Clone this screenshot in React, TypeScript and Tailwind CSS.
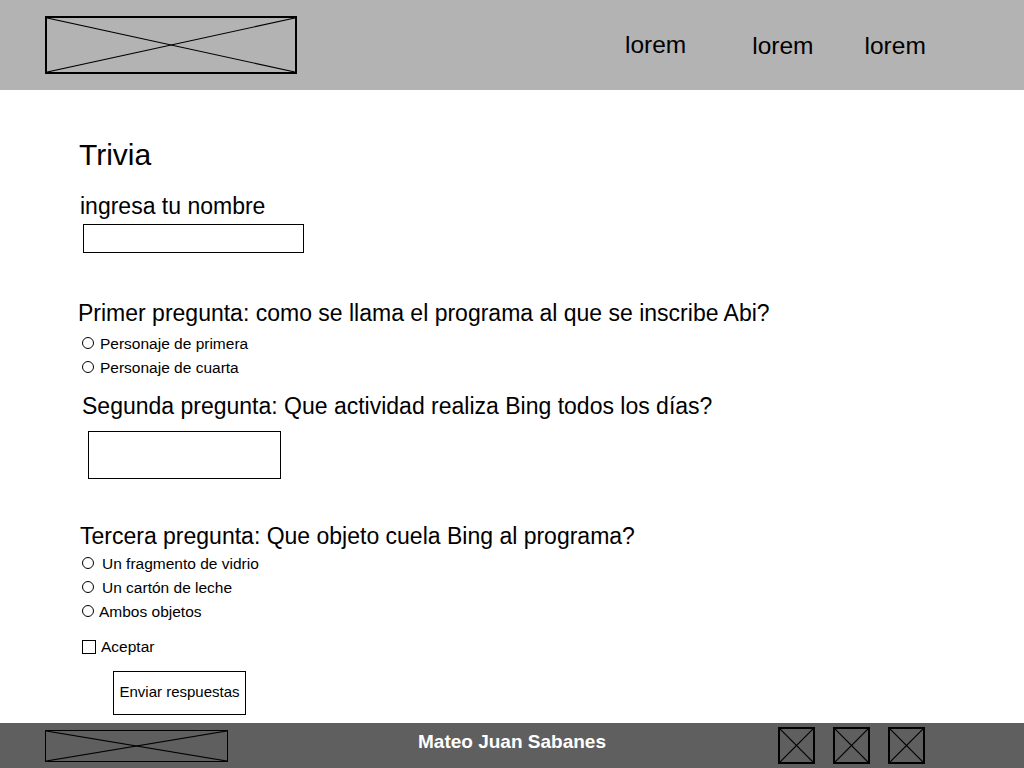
const navItems = [
  { label: 'lorem', offset: 'ml-[328px]' },
  { label: 'lorem', offset: 'ml-[66px] mt-[2px]' },
  { label: 'lorem', offset: 'ml-[51px] mt-[2px]' },
]

const firstOptions = ['Personaje de primera', 'Personaje de cuarta']

const thirdOptions = [
  { label: 'Un fragmento de vidrio', gap: 'gap-[8px]' },
  { label: 'Un cartón de leche', gap: 'gap-[8px]' },
  { label: 'Ambos objetos', gap: 'gap-[5px]' },
]

export default function App() {
  return (
    <div className="h-screen w-full flex flex-col bg-white text-black font-['Liberation_Sans',Arial,sans-serif]">
      <Header />
      <main className="flex-1 flex flex-col items-start">
        <TriviaForm />
      </main>
      <Footer />
    </div>
  )
}

function Placeholder({ className }: { className: string }) {
  return (
    <div className={className}>
      <svg className="w-full h-full block" viewBox="0 0 100 100" preserveAspectRatio="none">
        <line x1="0" y1="0" x2="100" y2="100" stroke="black" strokeWidth="1.2" vectorEffect="non-scaling-stroke" />
        <line x1="0" y1="100" x2="100" y2="0" stroke="black" strokeWidth="1.2" vectorEffect="non-scaling-stroke" />
      </svg>
    </div>
  )
}

function Header() {
  return (
    <header className="h-[90px] shrink-0 bg-[#b3b3b3] flex items-center">
      <Placeholder className="ml-[45px] w-[252px] h-[58px] border-2 border-black" />
      {navItems.map((item, i) => (
        <a key={i} className={`${item.offset} text-[24.5px] leading-[24px]`}>
          {item.label}
        </a>
      ))}
    </header>
  )
}

function Radio() {
  return <span className="mt-[5px] w-[12px] h-[12px] shrink-0 rounded-full border border-black" />
}

function TriviaForm() {
  return (
    <>
      <h1 className="mt-[50px] ml-[79px] text-[30px] leading-[30px]">Trivia</h1>

      <label className="mt-[25px] ml-[80px] text-[23px] leading-[23px]">ingresa tu nombre</label>
      <input type="text" className="mt-[6px] ml-[83px] w-[221px] h-[29px] border border-black outline-none" />

      <p className="mt-[49px] ml-[78px] text-[23px] leading-[23px]">
        Primer pregunta: como se llama el programa al que se inscribe Abi?
      </p>
      <div className="mt-[7px] ml-[82px] flex flex-col">
        {firstOptions.map((opt) => (
          <div key={opt} className="h-[24px] flex items-start gap-[6px] text-[15.5px] leading-[24px]">
            <Radio />
            <span>{opt}</span>
          </div>
        ))}
      </div>

      <p className="mt-[15px] ml-[82px] text-[23px] leading-[23px]">
        Segunda pregunta: Que actividad realiza Bing todos los días?
      </p>
      <textarea className="mt-[13px] ml-[88px] w-[193px] h-[48px] border border-black resize-none outline-none" />

      <p className="mt-[46px] ml-[80px] text-[23px] leading-[23px]">
        Tercera pregunta: Que objeto cuela Bing al programa?
      </p>
      <div className="mt-[4px] ml-[82px] flex flex-col">
        {thirdOptions.map((opt) => (
          <div key={opt.label} className={`h-[24px] flex items-start ${opt.gap} text-[15.5px] leading-[24px]`}>
            <Radio />
            <span>{opt.label}</span>
          </div>
        ))}
      </div>

      <div className="mt-[11px] ml-[82px] h-[24px] flex items-start gap-[5px] text-[15.5px] leading-[24px]">
        <span className="mt-[5px] w-[14px] h-[14px] border border-black" />
        <span>Aceptar</span>
      </div>

      <button className="mt-[12px] ml-[113px] w-[133px] h-[44px] pb-[3px] border border-black text-[15px] leading-[15px] text-black">
        Enviar respuestas
      </button>
    </>
  )
}

function Footer() {
  return (
    <footer className="h-[45px] shrink-0 bg-[#5f5f5f] grid grid-cols-[1fr_auto_1fr]">
      <div className="flex items-center">
        <Placeholder className="ml-[45px] w-[183px] h-[32px] border border-black" />
      </div>
      <div className="pt-[9px] text-white font-bold text-[19px] leading-[19px]">Mateo Juan Sabanes</div>
      <div className="flex items-center justify-end gap-[18px] pr-[99px]">
        {[0, 1, 2].map((i) => (
          <Placeholder key={i} className="w-[37px] h-[37px] border-2 border-black" />
        ))}
      </div>
    </footer>
  )
}
